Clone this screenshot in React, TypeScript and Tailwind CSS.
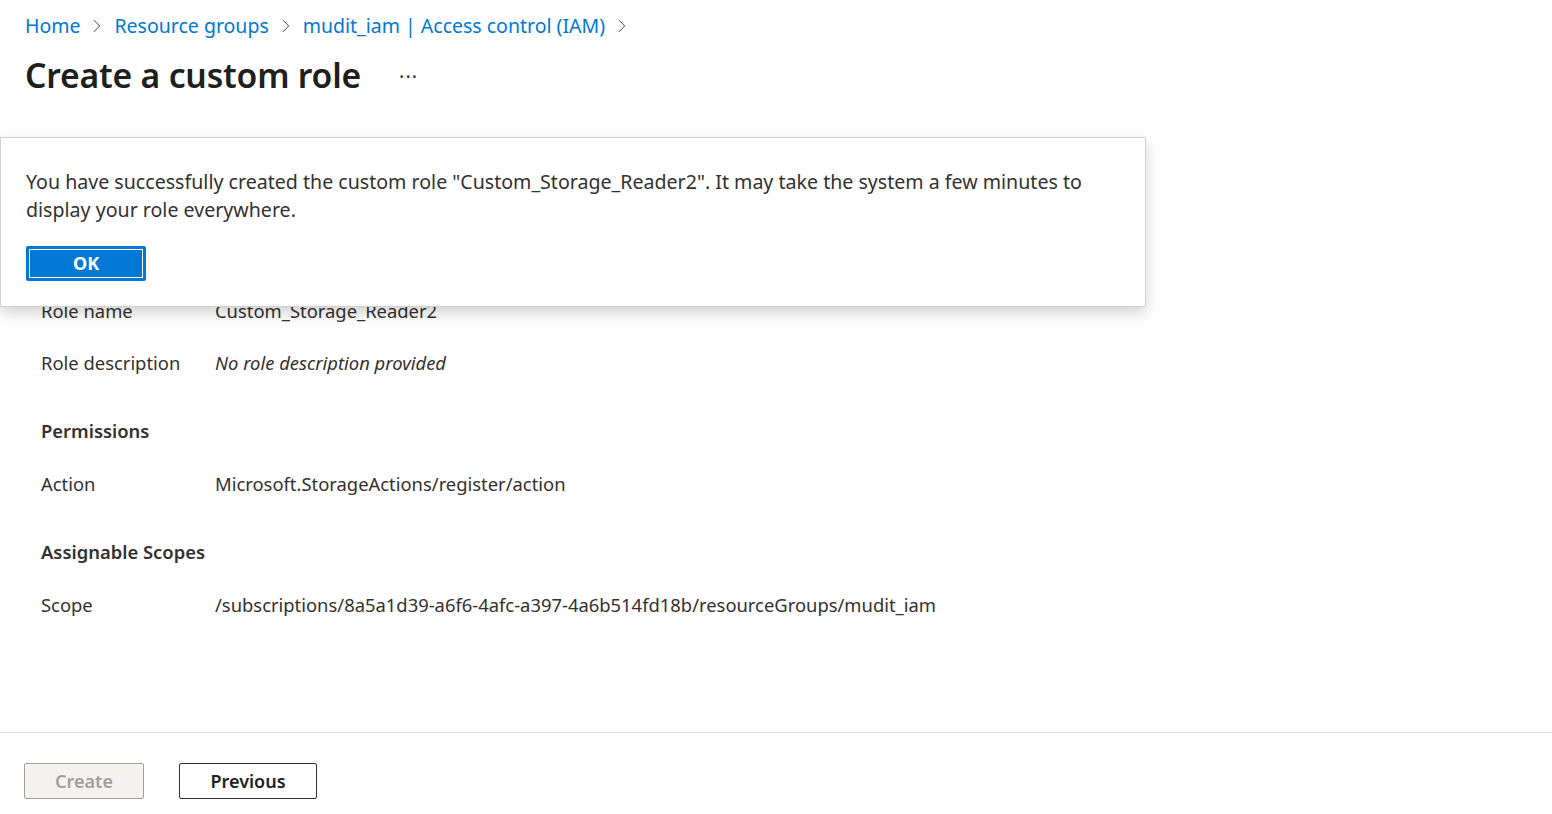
import { ChevronRight } from "lucide-react";

const crumbs = ["Home", "Resource groups", "mudit_iam | Access control (IAM)"];

function Row({ label, value, italic }: { label: string; value: string; italic?: boolean }) {
  return (
    <div className="flex items-center h-[28px]">
      <div className="w-[174px] shrink-0">{label}</div>
      <div className={italic ? "italic" : ""}>{value}</div>
    </div>
  );
}

export default function App() {
  return (
    <div
      className="relative w-full h-[814px] bg-white text-[#323130] overflow-hidden flex flex-col"
      style={{ fontFamily: '"Noto Sans", "Open Sans", sans-serif' }}
    >
      {/* breadcrumb */}
      <nav className="flex items-center pl-[25px] pt-[11px] h-[41px] text-[19.5px] text-[#0078d4]">
        {crumbs.map((c) => (
          <span key={c} className="flex items-center">
            <a href="#">{c}</a>
            <ChevronRight className="mx-[6px] w-[22px] h-[22px] text-[#605e5c]" strokeWidth={1.1} />
          </span>
        ))}
      </nav>

      <div className="flex items-center pl-[25px] h-[66px] pt-[2px]">
        <h1 className="text-[33.7px] font-semibold text-[#201f1e] tracking-[-0.2px]">Create a custom role</h1>
        <span className="ml-[38px] text-[20px] text-[#323130] mt-[4px] tracking-[1px]">···</span>
      </div>

      {/* summary body */}
      <div className="flex-1 pl-[41px] pt-[190px] text-[18.4px]">
        <Row label="Role name" value="Custom_Storage_Reader2" />
        <div className="mt-[24px]">
          <Row label="Role description" value="No role description provided" italic />
        </div>
        <div className="mt-[40px] h-[28px] flex items-center font-semibold">Permissions</div>
        <div className="mt-[25px]">
          <Row label="Action" value="Microsoft.StorageActions/register/action" />
        </div>
        <div className="mt-[40px] h-[28px] flex items-center font-semibold">Assignable Scopes</div>
        <div className="mt-[25px]">
          <Row label="Scope" value="/subscriptions/8a5a1d39-a6f6-4afc-a397-4a6b514fd18b/resourceGroups/mudit_iam" />
        </div>
      </div>

      {/* footer */}
      <div className="border-t border-[#e1dfdd] h-[82px] flex items-start pt-[30px] pl-[24px] gap-[35px]">
        <button className="w-[120px] h-[36px] rounded-[2px] border border-[#a19f9d] bg-[#f3f2f1] text-[#a19f9d] text-[18px] font-semibold">
          Create
        </button>
        <button className="w-[138px] h-[36px] rounded-[2px] border border-[#323130] bg-white text-[#201f1e] text-[18px] font-semibold">
          Previous
        </button>
      </div>

      {/* success dialog */}
      <div className="absolute left-0 top-[137px] w-[1146px] h-[170px] bg-white border border-[#d2d0ce] shadow-[0_6px_14px_rgba(0,0,0,0.18)] pl-[25px] pt-[30px]">
        <p className="text-[19.6px] leading-[28px] text-[#323130] max-w-[1080px]">
          You have successfully created the custom role "Custom_Storage_Reader2". It may take the system a few minutes to display your role everywhere.
        </p>
        <button className="mt-[22px] w-[120px] h-[35px] rounded-[2px] bg-[#0078d4] border-2 border-[#0078d4] outline outline-1 outline-white -outline-offset-[4px] text-white text-[18px] font-bold">
          OK
        </button>
      </div>
    </div>
  );
}
